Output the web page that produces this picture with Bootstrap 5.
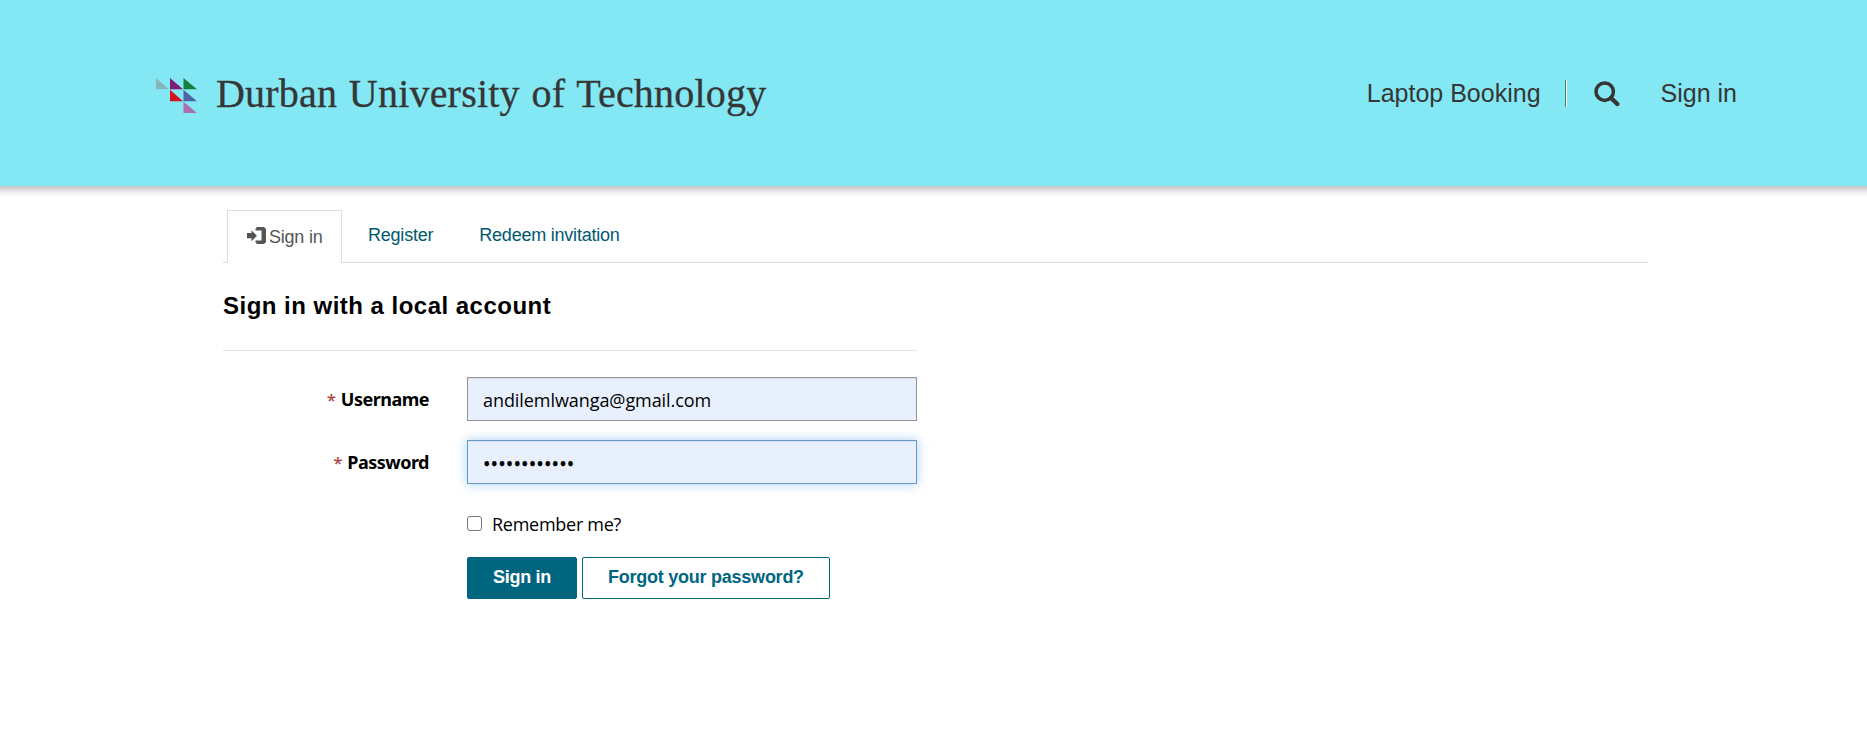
<!DOCTYPE html>
<html lang="en">
<head>
<meta charset="utf-8">
<title>Sign in - Durban University of Technology</title>
<meta name="viewport" content="width=device-width, initial-scale=1">
<link href="https://cdn.jsdelivr.net/npm/bootstrap@5.3.0/dist/css/bootstrap.min.css" rel="stylesheet">
<style>
body { font-family: "Liberation Sans", Arial, sans-serif; font-size: 18px; color: #000; background: #fff; overflow-x: hidden; }
.site-header { height: 185.500px; background: #83e8f3; box-shadow: 0 -17px 8px 20px rgba(0,0,0,.3); padding: 2px 130px 0 155px !important; }
.site-title { font-family: "Liberation Serif", Georgia, serif; font-size: 40px; line-height: 48px; color: #363636; letter-spacing: .2px; word-spacing: 1.5px; margin-left: 17px; -webkit-text-stroke: .3px #363636; }
.brand-mark { margin-top: 5px; }
.site-header .nav-link { font-size: 25px; line-height: 30px; color: #363636; padding: 0; }
.site-header .text-link { margin-top: -2px; }
.divider { width: 2px; height: 27px; background: linear-gradient(90deg,#5a7375 50%,#fff 50%); }
.site-header .search-link { margin: 0 41px 0 27px; }
.page { width: 1425px; margin: 24.500px 0 0 223px; }
.nav-tabs { height: 53px; border-bottom: 1px solid #ddd; padding-left: 4px; }
.nav-tabs .nav-link { border-radius: 0; color: #00596f; font-size: 18px; line-height: 26px; letter-spacing: -.22px; padding: 12px 20px 13px 26px; border: 0; }
.nav-tabs .nav-link.active { height: 53px; width: 115px; border: 1px solid #ddd; border-bottom-color: #fff; color: #555; padding: 13px 0 12px 19px; white-space: nowrap; }
.tab-icon { margin: 0 3px 2px 0; }
.form-column { width: 694px; }
h2 { font-size: 24px; font-weight: 700; line-height: 30px; margin: 28px 0 29px; letter-spacing: .48px; }
hr { margin: 0 0 26px; border-color: #e3e3e3; opacity: 1; }
.field-label { width: 244px; padding-right: 38px; text-align: right; font: 700 18px/26px "Noto Sans", "Segoe UI", sans-serif; letter-spacing: -.5px; }
.field-label span { color: #a94442; font-weight: 500; font-size: 17px; margin-right: 1px; }
.form-control { width: 450px; height: 44px; border: 1px solid #949494; border-radius: 0; background: #e8f0fe; color: #000; padding: 4px 15px 2px; font: 18px/26px "Open Sans", "Segoe UI", sans-serif; letter-spacing: -.07px; box-shadow: inset 0 1px 1px rgba(0,0,0,.075); }
.form-control.is-focused { border-color: #6699cc; padding-top: 5px; padding-bottom: 1px; box-shadow: inset 0 1px 1px rgba(0,0,0,.075), 0 0 10px rgba(102,175,233,.6); }
.secret { font-size: 20px; letter-spacing: .1px; -webkit-text-stroke: .4px #000; }
.form-row { height: 44px; }
.form-row + .form-row { margin-top: 19px; }
.after-label { margin-left: 244px; }
.remember { height: 26px; margin-top: 27px; font: 18px/26px "Open Sans", "Segoe UI", sans-serif; letter-spacing: -.27px; }
.form-check-input { width: 15px; height: 15px; margin: 0 10px 2px 0; border: 1px solid #767676; border-radius: 3px !important; }
.actions { margin-top: 20px; gap: 5px; }
.btn { height: 42px; border-radius: 2px; font-size: 18px; font-weight: 700; line-height: 26px; padding: 6px 0 8px; border: 1px solid #00667f; letter-spacing: -.25px; }
.btn-signin, .btn-signin:hover { width: 110px; background: #00667f; color: #fff; }
.btn-forgot, .btn-forgot:hover { width: 248px; background: #fff; color: #00667f; }
</style>
</head>
<body>
<header class="site-header navbar d-flex align-items-center justify-content-between flex-nowrap">
  <a class="d-flex align-items-center text-decoration-none" href="#">
    <svg class="brand-mark" width="44" height="37" viewBox="0 0 44 37">
      <path fill="#84b7b9" d="M1 0v11.300h13z"/><path fill="#801d70" d="M15 0v11.300h13z"/><path fill="#15803c" d="M28.500 0v11.300H42z"/>
      <path fill="#d2131c" d="M15 11.800V23.300h13z"/><path fill="#4c65a5" d="M28.500 11.800V23.300H42z"/><path fill="#af6eaf" d="M28.500 23.800V35H42z"/>
    </svg>
    <span class="site-title text-nowrap">Durban University of Technology</span>
  </a>
  <nav class="d-flex align-items-center">
    <a class="nav-link text-link" href="#">Laptop Booking</a>
    <span class="divider ms-4"></span>
    <a class="nav-link search-link d-flex" href="#" aria-label="Search"><svg width="26" height="26" viewBox="0 0 26 26" fill="none" stroke="#363636"><circle cx="10.700" cy="10.700" r="8.700" stroke-width="3.500"/><path d="M17 17l6.300 6" stroke-width="4.400" stroke-linecap="round"/></svg></a>
    <a class="nav-link text-link" href="#">Sign in</a>
  </nav>
</header>
<main class="page">
  <ul class="nav nav-tabs">
    <li class="nav-item"><a class="nav-link active d-flex align-items-center" href="#"><svg class="tab-icon flex-shrink-0" width="19" height="18" viewBox="0 0 19 18"><path fill="#555" d="M0 6h4.500V3.200L10 8.700l-5.500 5.500v-3H0zM10 0h7l2 2v13l-2 2h-7l-1.500-2v-1.500h6V3.500h-6V2z"/></svg>Sign in</a></li>
    <li class="nav-item"><a class="nav-link" href="#">Register</a></li>
    <li class="nav-item"><a class="nav-link" href="#">Redeem invitation</a></li>
  </ul>
  <form class="form-column">
    <h2>Sign in with a local account</h2>
    <hr>
    <div class="form-row d-flex align-items-center">
      <label class="field-label"><span>*</span> Username</label>
      <div class="form-control d-flex align-items-center">andilemlwanga@gmail.com</div>
    </div>
    <div class="form-row d-flex align-items-center">
      <label class="field-label"><span>*</span> Password</label>
      <div class="form-control is-focused d-flex align-items-center"><span class="secret">••••••••••••</span></div>
    </div>
    <div class="after-label">
      <div class="remember d-flex align-items-center"><input class="form-check-input" type="checkbox" id="remember"><label for="remember">Remember me?</label></div>
      <div class="actions d-flex">
        <button type="button" class="btn btn-signin">Sign in</button>
        <button type="button" class="btn btn-forgot">Forgot your password?</button>
      </div>
    </div>
  </form>
</main>
<script src="https://cdn.jsdelivr.net/npm/bootstrap@5.3.0/dist/js/bootstrap.bundle.min.js"></script>
</body>
</html>
